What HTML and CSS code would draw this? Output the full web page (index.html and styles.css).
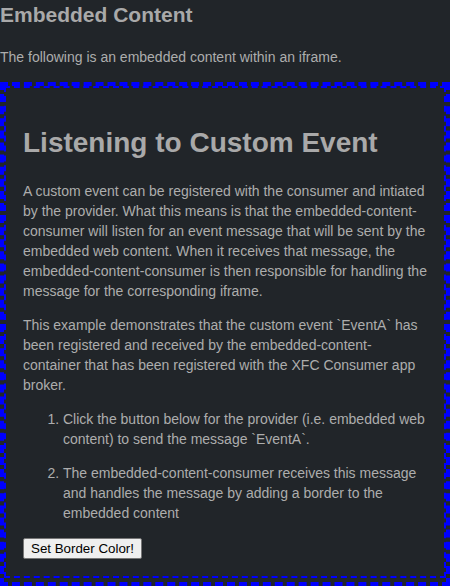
FILE: index.html
```html
<!DOCTYPE html>
<html lang="en">
<head>
<meta charset="utf-8">
<title>Embedded Content</title>
<link rel="stylesheet" href="styles.css">
</head>
<body>
<h2 class="page-title">Embedded Content</h2>
<p class="intro">The following is an embedded content within an iframe.</p>
<div class="frame">
  <div class="frame-inner">
    <h1 class="frame-title">Listening to Custom Event</h1>
    <p class="text">A custom event can be registered with the consumer and intiated by the provider. What this means is that the embedded-content-consumer will listen for an event message that will be sent by the embedded web content. When it receives that message, the embedded-content-consumer is then responsible for handling the message for the corresponding iframe.</p>
    <p class="text">This example demonstrates that the custom event `EventA` has been registered and received by the embedded-content-container that has been registered with the XFC Consumer app broker.</p>
    <ol class="steps">
      <li>Click the button below for the provider (i.e. embedded web content) to send the message `EventA`.</li>
      <li>The embedded-content-consumer receives this message and handles the message by adding a border to the embedded content</li>
    </ol>
    <button class="btn" type="button">Set Border Color!</button>
  </div>
</div>
</body>
</html>
```
FILE: styles.css
```css
html, body {
  background: #212529;
}
body {
  margin: 0;
  font-family: "Liberation Sans", Arial, sans-serif;
  font-size: 14px;
  line-height: 20px;
  color: #adadad;
}
.page-title {
  margin: 0;
  padding-top: 3px;
  font-size: 21px;
  line-height: 24px;
  font-weight: bold;
  color: #a9a9a9;
}
.intro {
  margin: 20px 0 15px;
}
.frame {
  border: 4px dashed #0000ff;
}
.frame-inner {
  border: 2px dashed #0000ff;
  padding: 0 17px 17px;
  margin-bottom: 4px;
}
.frame-title {
  margin: 39px 0 22px;
  font-size: 28px;
  line-height: 32px;
  font-weight: bold;
  color: #a9a9a9;
}
.text {
  margin: 14px 0;
}
.steps {
  margin: 14px 0 15px;
  padding-left: 40px;
}
.steps li + li {
  margin-top: 14px;
}
.btn {
  display: block;
  appearance: none;
  -webkit-appearance: none;
  margin: 0;
  padding: 1px 7px;
  height: 21px;
  background: #efefef;
  border: 1px solid #767676;
  border-radius: 2px;
  color: #000000;
  font-family: "Liberation Sans", Arial, sans-serif;
  font-size: 13.333px;
  line-height: 17px;
}
```
